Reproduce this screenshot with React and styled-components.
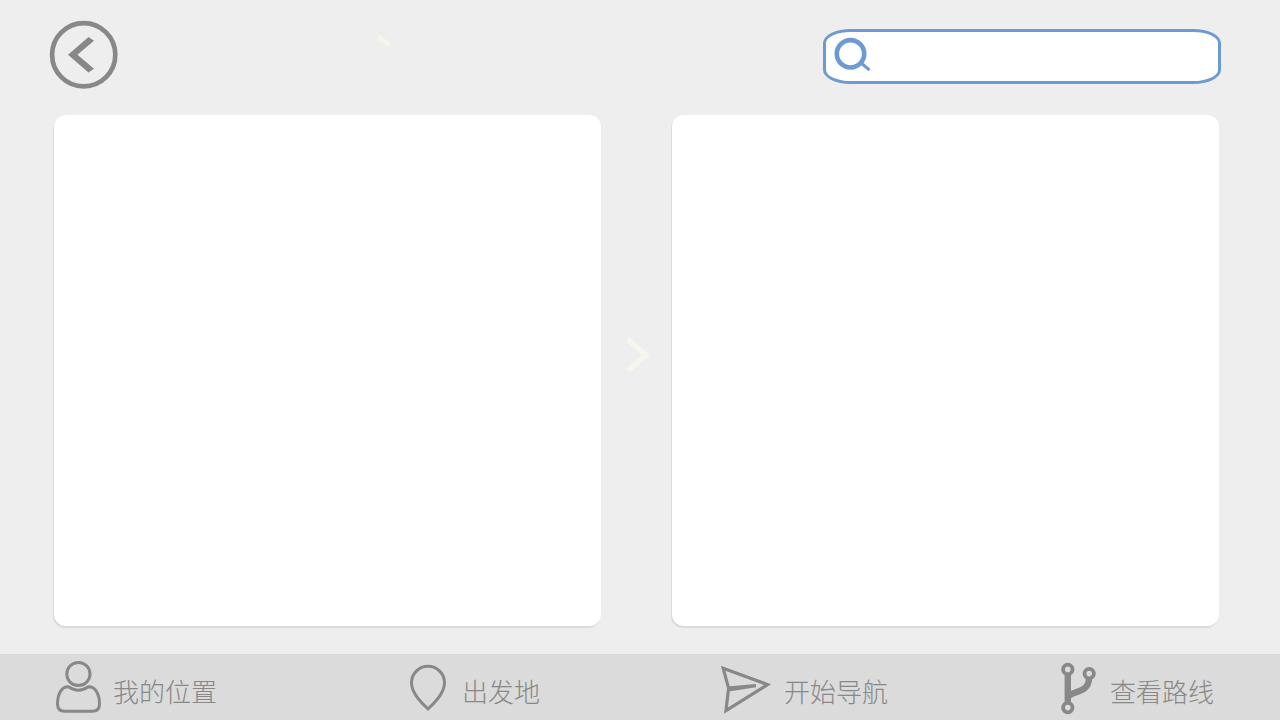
import React from "react";
import styled, { createGlobalStyle } from "styled-components";

const GlobalStyle = createGlobalStyle`
  * { box-sizing: border-box; }
  body {
    margin: 0;
    background: #eeeeee;
    font-family: "Noto Sans CJK SC", sans-serif;
  }
  svg { display: block; flex: none; }
`;

const Page = styled.div`
  display: flex;
  flex-direction: column;
  min-height: 100vh;
`;

const Header = styled.header`
  display: flex;
  align-items: flex-start;
  padding: 20px 59px 26px 49px;
`;

const PlainButton = styled.button`
  padding: 0;
  border: 0;
  background: none;
  color: #888888;
  font: inherit;
  cursor: pointer;
`;

const Mark = styled.svg`
  margin: 14px auto 0 256px;
`;

const SearchBox = styled.label`
  display: flex;
  align-items: flex-start;
  flex: 0 1 398px;
  height: 55px;
  margin-top: 9px;
  padding: 5px 24px 5px 8px;
  border: 3px solid #6b9bd2;
  border-radius: 28px / 14px;
  background: #ffffff;
  color: #6b9bd2;
`;

const SearchInput = styled.input`
  flex: 1;
  min-width: 0;
  align-self: stretch;
  margin-left: 8px;
  border: 0;
  outline: 0;
  background: transparent;
  color: #888888;
  font: inherit;
  font-size: 20px;
`;

const Main = styled.main`
  display: grid;
  grid-template-columns: 1fr 71px 1fr;
  flex: 1;
  padding: 0 61px 28px 54px;
`;

const Panel = styled.section`
  min-height: 300px;
  border-radius: 12px;
  background: #ffffff;
  box-shadow: -1px 2px 1px #dadada;
`;

const Divider = styled.div`
  display: flex;
  align-items: center;
  justify-content: center;
  padding: 0 0 32px 3px;
`;

const Footer = styled.nav`
  display: grid;
  grid-template-columns: 353fr 312fr 340fr 219fr;
  height: 66px;
  padding-left: 56px;
  background: #dbdbdb;
`;

const NavButton = styled(PlainButton)`
  display: flex;
  align-items: center;
  justify-self: start;
  gap: ${(p) => p.$gap}px;
`;

const NavLabel = styled.span`
  padding-top: 8px;
  font-size: 26px;
  font-weight: 300;
  line-height: 40px;
  white-space: nowrap;
`;

const stroke = { fill: "none", stroke: "currentColor" };

const BackIcon = () => (
  <svg width="69" height="69" viewBox="0 0 69 69" aria-hidden="true">
    <circle cx="34.7" cy="34.8" r="31.6" strokeWidth="4.7" {...stroke} />
    <path d="M39.5 17 19 34.7 39.5 52.5 45 48.8 28.5 34.7 45 20.8Z" fill="currentColor" />
  </svg>
);

const SearchIcon = () => (
  <svg width="38" height="36" viewBox="0 0 38 36" aria-hidden="true">
    <circle cx="16.5" cy="16.8" r="13.7" strokeWidth="4.6" {...stroke} />
    <path d="M27 26 35.5 33" strokeWidth="3" {...stroke} />
  </svg>
);

const PersonIcon = () => (
  <svg width="46" height="54" viewBox="0 0 46 54" aria-hidden="true">
    <circle cx="22.4" cy="14" r="11.6" strokeWidth="3" {...stroke} />
    <path
      d="M12.5 26.8C5 26.5 1.5 35 1.5 44Q1.5 51.3 9 51.3H36Q43.5 51.3 43.5 44C43.5 35 40 26.5 32.3 26.8Q27 30.3 22.4 30.3T12.5 26.8Z"
      strokeWidth="3"
      strokeLinejoin="round"
      {...stroke}
    />
  </svg>
);

const PinIcon = () => (
  <svg width="38" height="48" viewBox="0 0 38 48" aria-hidden="true">
    <path
      d="M19 46C12 39 2.5 30 2.5 19.8A16.5 16.5 0 0 1 35.5 19.8C35.5 30 26 39 19 46Z"
      strokeWidth="3"
      {...stroke}
    />
  </svg>
);

const SendIcon = () => (
  <svg width="50" height="54" viewBox="0 0 50 54" aria-hidden="true">
    <path d="M7.5 27.8 2.2 8.3 46.5 24.6 5 50.6 7.3 30.5" strokeWidth="3.2" {...stroke} />
    <path d="M6 26.4 35 24V27.2L6 31.8Z" fill="currentColor" />
  </svg>
);

const RouteIcon = () => (
  <svg width="36" height="56" viewBox="0 -2 36 56" aria-hidden="true">
    <circle cx="6.8" cy="8.4" r="4.7" strokeWidth="3.8" {...stroke} />
    <circle cx="28.2" cy="12.6" r="4.7" strokeWidth="3.8" {...stroke} />
    <circle cx="6.8" cy="46.6" r="4.7" strokeWidth="3.8" {...stroke} />
    <path d="M6.8 13V42" strokeWidth="6.4" {...stroke} />
    <path d="M6.8 35.5C12 29.5 27.5 32.5 28 17.5" strokeWidth="6.4" {...stroke} />
  </svg>
);

const navItems = [
  { label: "我的位置", Icon: PersonIcon, gap: 11 },
  { label: "出发地", Icon: PinIcon, gap: 15 },
  { label: "开始导航", Icon: SendIcon, gap: 13 },
  { label: "查看路线", Icon: RouteIcon, gap: 13 },
];

export default function App() {
  return (
    <Page>
      <GlobalStyle />
      <Header>
        <PlainButton type="button" aria-label="返回">
          <BackIcon />
        </PlainButton>
        <Mark width="20" height="16" viewBox="0 0 20 16" aria-hidden="true">
          <path d="M4 3 15.5 11" fill="none" stroke="#f5f6eb" strokeWidth="5" />
        </Mark>
        <SearchBox>
          <SearchIcon />
          <SearchInput type="search" aria-label="搜索" />
        </SearchBox>
      </Header>
      <Main>
        <Panel />
        <Divider>
          <svg width="26" height="36" viewBox="0 0 26 36" aria-hidden="true">
            <path d="M3 2.5 21 18 3 33.5" fill="none" stroke="#f6f7ec" strokeWidth="5.4" />
          </svg>
        </Divider>
        <Panel />
      </Main>
      <Footer>
        {navItems.map(({ label, Icon, gap }) => (
          <NavButton key={label} type="button" $gap={gap}>
            <Icon />
            <NavLabel>{label}</NavLabel>
          </NavButton>
        ))}
      </Footer>
    </Page>
  );
}
